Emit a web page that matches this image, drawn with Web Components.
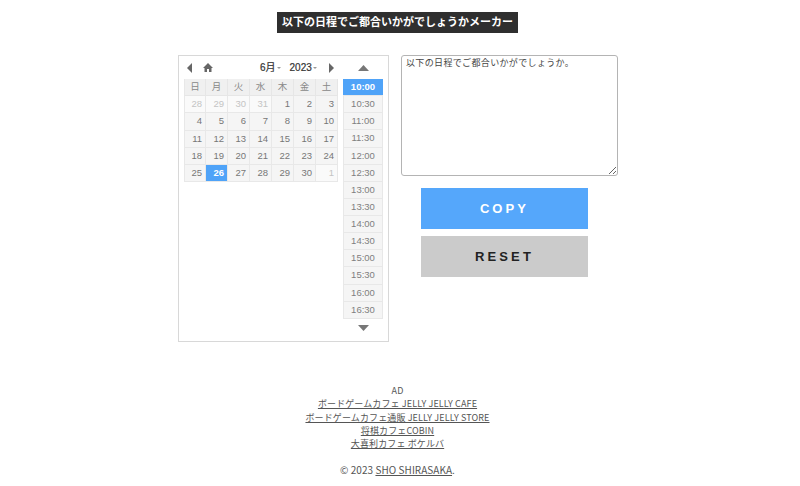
<!DOCTYPE html>
<html lang="ja">
<head>
<meta charset="utf-8">
<title>以下の日程でご都合いかがでしょうかメーカー</title>
<style>
html, body { margin: 0; background: #fff; }
body { font-family: "Liberation Sans", "Noto Sans CJK JP", sans-serif; color: #333; }
</style>
</head>
<body>
<app-page>
    <page-title slot="title">以下の日程でご都合いかがでしょうかメーカー</page-title>
    <date-picker slot="picker"></date-picker>
    <memo-box slot="memo" text="以下の日程でご都合いかがでしょうか。"></memo-box>
    <action-button slot="memo" kind="copy">COPY</action-button>
    <action-button slot="memo" kind="reset">RESET</action-button>
    <site-footer slot="footer"></site-footer>
</app-page>

<script>
const FONT = '"Liberation Sans", "Noto Sans CJK JP", sans-serif';

function shadowOf (el, html){
    const root = el.attachShadow({ mode: 'open' });
    root.innerHTML = html;
    return root;
}

customElements.define('app-page',
    class extends HTMLElement {
        constructor() {
            super();
            shadowOf(this, `
            <style>
            :host { display: block; width: 800px; height: 486px; overflow: hidden; }
            .head { display: flex; justify-content: center; padding: 12px 5px 0 0; }
            .main { display: flex; justify-content: center; gap: 12px; margin-top: 22px; padding-right: 4px; }
            .memo { display: flex; flex-direction: column; width: 217px; }
            .foot { margin-top: 42px; padding-right: 5px; }
            </style>
            <div class="head"><slot name="title"></slot></div>
            <div class="main">
                <slot name="picker"></slot>
                <div class="memo"><slot name="memo"></slot></div>
            </div>
            <div class="foot"><slot name="footer"></slot></div>
            `);
        }
    }
);

customElements.define('page-title',
    class extends HTMLElement {
        constructor() {
            super();
            shadowOf(this, `
            <style>
            :host {
                display: block;
                background: #2f2f2f;
                color: #fff;
                font: bold 11px/21px ${FONT};
                padding: 0 5px;
                width: 231px;
                white-space: nowrap;
            }
            </style>
            <slot></slot>
            `);
        }
    }
);

customElements.define('day-grid',
    class extends HTMLElement {
        constructor() {
            super();
            const heads = ['日','月','火','水','木','金','土'];
            const days = [28,29,30,31,1,2,3,4,5,6,7,8,9,10,11,12,13,14,15,16,17,18,19,20,21,22,23,24,25,26,27,28,29,30,1];
            let cells = heads.map(d => `<div class="cell head">${d}</div>`).join('');
            days.forEach((d, i) => {
                let cls = 'cell';
                if (i < 4 || i === 34) cls += ' other';
                if (i === 29) cls += ' on';
                cells += `<div class="${cls}">${d}</div>`;
            });
            shadowOf(this, `
            <style>
            :host { display: block; width: 154px; }
            .grid {
                display: grid;
                grid-template-columns: repeat(7, 22px);
                grid-auto-rows: 17.2px;
                box-sizing: border-box;
                font: 9.5px/16px ${FONT};
                color: #777;
            }
            .cell {
                box-sizing: border-box;
                background: #f5f5f5;
                border: 1px solid #e8e8e8;
                border-width: 0 1px 1px 0;
                text-align: right;
                padding-right: 3px;
            }
            .cell:nth-child(7n+1) { border-left: 1px solid #e8e8e8; }
            .head { background: #f0f0f0; color: #888; text-align: center; padding: 0; font-size: 9.5px; border-color: #e6e6e6; }
            .other { background: #fafafa; color: #c4c4c4; }
            .on { background: #4fa3f8; color: #fff; font-weight: bold; }
            </style>
            <div class="grid">${cells}</div>
            `);
        }
    }
);

customElements.define('time-list',
    class extends HTMLElement {
        constructor() {
            super();
            let rows = '';
            for (let m = 600; m <= 990; m += 30) {
                const t = Math.floor(m / 60) + ':' + (m % 60 === 0 ? '00' : '30');
                rows += `<div class="row${m === 600 ? ' on' : ''}">${t}</div>`;
            }
            shadowOf(this, `
            <style>
            :host { display: flex; flex-direction: column; align-items: center; width: 40px; }
            svg { display: block; }
            .up { margin: 9px 0 8px; }
            .down { margin: 6px 0 0; }
            .list {
                width: 40px;
                box-sizing: border-box;
                border: 1px solid #e8e8e8;
                border-width: 0 1px;
                font: 9.5px/16.13px ${FONT};
                color: #808080;
                text-align: center;
            }
            .row { background: #f5f5f5; border-bottom: 1px solid #e8e8e8; }
            .on { background: #4fa3f8; color: #fff; font-weight: bold; margin: 0 -1px; }
            </style>
            <svg class="up" width="11" height="6" viewBox="0 0 11 6"><path d="M5.5 0 L11 6 H0 Z" fill="#777"/></svg>
            <div class="list">${rows}</div>
            <svg class="down" width="11" height="6" viewBox="0 0 11 6"><path d="M0 0 H11 L5.5 6 Z" fill="#777"/></svg>
            `);
        }
    }
);

customElements.define('date-picker',
    class extends HTMLElement {
        constructor() {
            super();
            shadowOf(this, `
            <style>
            :host {
                display: block;
                box-sizing: border-box;
                width: 211px;
                height: 287px;
                border: 1px solid #d8d8d8;
                background: #fff;
                padding: 0 5px;
            }
            .wrap { display: flex; gap: 5px; }
            .nav {
                display: flex;
                align-items: center;
                height: 23px;
                font: 10px/23px ${FONT};
                color: #333;
                width: 154px;
            }
            .nav svg { display: block; flex: none; }
            .home { margin-left: 11px; }
            .month { margin-left: 47px; display: flex; align-items: center; gap: 1px; -webkit-text-stroke: .2px #333; }
            .year { margin-left: 9px; display: flex; align-items: center; gap: 1px; -webkit-text-stroke: .2px #333; }
            .caret { width: 0; height: 0; border: 2px solid transparent; border-top: 2px solid #999; margin-top: 3px; }
            .next { margin-left: 12px; }
            </style>
            <div class="wrap">
                <div>
                    <div class="nav">
                        <svg style="margin-left:3px" width="5" height="10" viewBox="0 0 5 10"><path d="M5 0 V10 L0 5 Z" fill="#666"/></svg>
                        <svg class="home" width="10" height="9" viewBox="0 0 10 9"><path d="M5 0 L10 5 H8.5 V9 H6 V6 H4 V9 H1.5 V5 H0 Z" fill="#666"/></svg>
                        <span class="month">6月<i class="caret"></i></span>
                        <span class="year">2023<i class="caret"></i></span>
                        <svg class="next" width="5" height="10" viewBox="0 0 5 10"><path d="M0 0 V10 L5 5 Z" fill="#666"/></svg>
                    </div>
                    <day-grid></day-grid>
                </div>
                <time-list></time-list>
            </div>
            `);
        }
    }
);

customElements.define('memo-box',
    class extends HTMLElement {
        constructor() {
            super();
            const root = shadowOf(this, `
            <style>
            :host { display: block; height: 121px; }
            textarea {
                display: block;
                box-sizing: border-box;
                width: 217px;
                height: 121px;
                margin: 0;
                padding: 1px 4px;
                border: 1px solid #b4b4b4;
                border-radius: 3px;
                outline: none;
                font: 9px/12px ${FONT};
                color: #444;
                letter-spacing: .35px;
                background: #fff;
            }
            </style>
            <textarea></textarea>
            `);
            root.querySelector('textarea').value = this.getAttribute('text') || '';
        }
    }
);

customElements.define('action-button',
    class extends HTMLElement {
        constructor() {
            super();
            shadowOf(this, `
            <style>
            :host {
                display: block;
                width: 167px;
                margin: 12px 0 0 20px;
                font: bold 13px/41px ${FONT};
                letter-spacing: 3.1px;
                text-align: center;
            }
            :host([kind="copy"]) { background: #55a7fb; color: #fff; }
            :host([kind="reset"]) { background: #cbcbcb; color: #222; margin-top: 7px; }
            </style>
            <slot></slot>
            `);
        }
    }
);

customElements.define('site-footer',
    class extends HTMLElement {
        constructor() {
            super();
            shadowOf(this, `
            <style>
            :host { display: block; text-align: center; font: 9px/13.3px "Noto Sans CJK JP", sans-serif; letter-spacing: .12px; color: #555; }
            a { color: #555; text-decoration: underline; }
            p { margin: 13px 0 0; font-size: 10px; letter-spacing: .05px; }
            </style>
            <div>AD</div>
            <div><a href="#">ボードゲームカフェ JELLY JELLY CAFE</a></div>
            <div><a href="#">ボードゲームカフェ通販 JELLY JELLY STORE</a></div>
            <div><a href="#">将棋カフェCOBIN</a></div>
            <div><a href="#">大喜利カフェ ボケルバ</a></div>
            <p>© 2023 <a href="#">SHO SHIRASAKA</a>.</p>
            `);
        }
    }
);
</script>
</body>
</html>
